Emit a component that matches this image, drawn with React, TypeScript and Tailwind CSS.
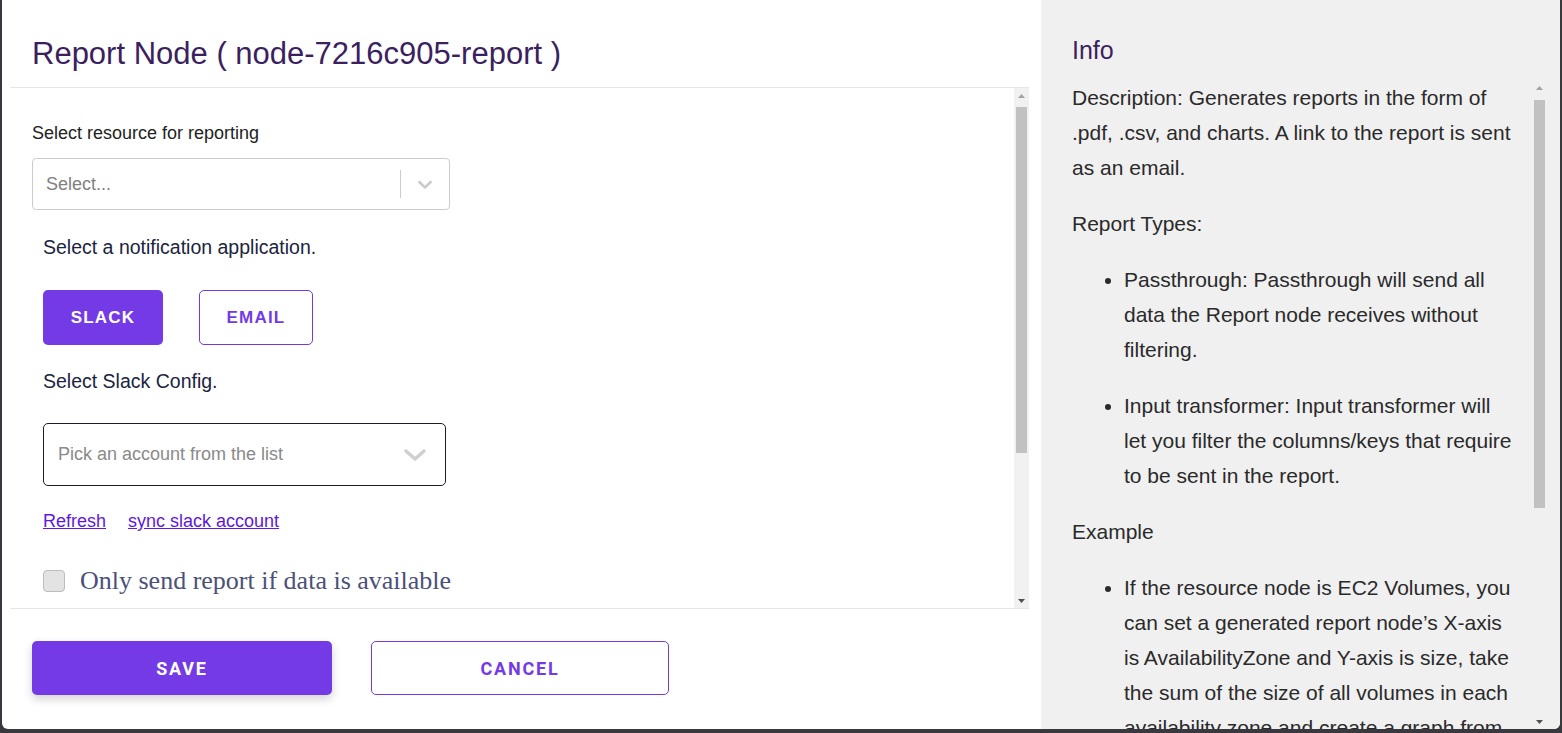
import React from 'react';

const sans = "font-['Liberation_Sans',Arial,sans-serif]";

function Chevron({ className }: { className?: string }) {
  return (
    <svg viewBox="0 0 20 20" className={className} fill="currentColor">
      <path d="M4.516 7.548c0.436-0.446 1.043-0.481 1.576 0l3.908 3.747 3.908-3.747c0.533-0.481 1.141-0.446 1.574 0 0.436 0.445 0.408 1.197 0 1.615-0.406 0.418-4.695 4.502-4.695 4.502-0.217 0.223-0.502 0.335-0.787 0.335s-0.57-0.112-0.789-0.335c0 0-4.287-4.084-4.695-4.502s-0.436-1.17 0-1.615z" />
    </svg>
  );
}

// classic scrollbar look, drawn since the headless browser hides native ones
function Scrollbar({ thumbTop, thumbHeight, track }: { thumbTop: number; thumbHeight: number; track: string }) {
  return (
    <div className={`w-[15px] h-full shrink-0 flex flex-col ${track}`}>
      <div className="h-[15px] flex items-center justify-center shrink-0">
        <svg width="7" height="4" viewBox="0 0 7 4"><polygon points="3.5,0 7,4 0,4" fill="#a3a3a3" /></svg>
      </div>
      <div className="flex-1 px-[2px]">
        <div className="bg-[#c1c1c1]" style={{ marginTop: thumbTop, height: thumbHeight }} />
      </div>
      <div className="h-[15px] flex items-center justify-center shrink-0">
        <svg width="7" height="4" viewBox="0 0 7 4"><polygon points="0,0 7,0 3.5,4" fill="#505050" /></svg>
      </div>
    </div>
  );
}

export default function App() {
  return (
    <div className={`w-full h-[733px] bg-[#38383e] overflow-hidden ${sans}`}>
      <div className="ml-[2px] w-[1558px] h-[729px] bg-white rounded-b-[6px] overflow-hidden flex">
        {/* Left: form */}
        <div className="w-[1039px] h-full flex flex-col pl-[8px] pr-[12px]">
          <div className="h-[87px] pl-[22px] pt-[35px] shrink-0">
            <h1 className="text-[31px] leading-[37px] text-[#3c1f5f]">Report Node ( node-7216c905-report )</h1>
          </div>

          <div className="h-[522px] border-y border-[#e6e6e6] flex shrink-0">
            <div className="flex-1 overflow-hidden pl-[22px] pt-[35px]">
              <div className="text-[18px] leading-[20px] text-[#222]">Select resource for reporting</div>
              <div className="mt-[15px] w-[418px] h-[52px] border border-[#cccccc] rounded-[4px] flex items-center">
                <span className="flex-1 pl-[13px] text-[18px] text-[#808080]">Select...</span>
                <span className="w-px h-[28px] bg-[#cccccc]" />
                <span className="px-[12px] text-[#cccccc]">
                  <Chevron className="w-[24px] h-[24px]" />
                </span>
              </div>

              <div className="pl-[11px]">
                <div className="mt-[27px] text-[19.5px] leading-[20px] text-[#1b2440]">Select a notification application.</div>
                <div className="mt-[33px] flex gap-[36px]">
                  <button className="w-[120px] h-[55px] rounded-[5px] bg-[#733ae6] text-white text-[17px] font-bold tracking-[1.2px]">
                    SLACK
                  </button>
                  <button className="w-[114px] h-[55px] rounded-[5px] border border-[#733ae6] bg-white text-[#733ae6] text-[17px] font-bold tracking-[1.2px]">
                    EMAIL
                  </button>
                </div>

                <div className="mt-[26px] text-[19.5px] leading-[20px] text-[#1b2440]">Select Slack Config.</div>
                <div className="mt-[32px] w-[403px] h-[63px] border border-[#1c1c30] rounded-[5px] flex items-center pl-[14px] pr-[18px]">
                  <span className="flex-1 text-[18px] text-[#8a8a8a]">Pick an account from the list</span>
                  <svg width="24" height="16" viewBox="0 0 24 16" fill="none" stroke="#cfcfcf" strokeWidth="3.5" strokeLinecap="round" strokeLinejoin="round">
                    <polyline points="3,4 12,12 21,4" />
                  </svg>
                </div>

                <div className="mt-[25px] flex gap-[22px] text-[18px] leading-[20px] text-[#6118dd]">
                  <a href="#" className="underline">Refresh</a>
                  <a href="#" className="underline">sync slack account</a>
                </div>

                <label className="mt-[36px] flex items-center gap-[15px]">
                  <span className="w-[22px] h-[22px] rounded-[4px] bg-[#e3e3e3] border border-[#bdbdbd] shrink-0" />
                  <span className="font-['Liberation_Serif',serif] text-[26px] leading-[28px] text-[#4b5079]">Only send report if data is available</span>
                </label>
              </div>
            </div>
            <Scrollbar thumbTop={4} thumbHeight={346} track="bg-[#f1f1f1]" />
          </div>

          <div className="pl-[22px] pt-[32px] flex gap-[39px]">
            <button className="w-[300px] h-[54px] rounded-[5px] bg-[#733ae6] text-white font-['Roboto',sans-serif] font-bold text-[18px] tracking-[1.8px] shadow-[0_4px_10px_rgba(0,0,0,0.18)]">
              SAVE
            </button>
            <button className="w-[298px] h-[54px] rounded-[5px] border border-[#733ae6] bg-white text-[#733ae6] font-['Roboto',sans-serif] font-bold text-[18px] tracking-[1.8px]">
              CANCEL
            </button>
          </div>
        </div>

        {/* Right: info */}
        <div className="w-[519px] h-full bg-[#f0f0f0] flex flex-col pl-[31px] pr-[13px] pt-[35px]">
          <h2 className="text-[25px] leading-[30px] text-[#3c1f5f] shrink-0">Info</h2>
          <div className="mt-[15px] flex-1 min-h-0 flex justify-between">
            <div className="w-[441px] overflow-hidden text-[21px] leading-[35px] text-[#2a2a2a]">
              <div className="flex flex-col gap-[21px]">
                <p>Description: Generates reports in the form of .pdf, .csv, and charts. A link to the report is sent as an email.</p>
                <p>Report Types:</p>
                <ul className="list-disc pl-[52px] flex flex-col gap-[21px]">
                  <li>Passthrough: Passthrough will send all data the Report node receives without filtering.</li>
                  <li>Input transformer: Input transformer will let you filter the columns/keys that require to be sent in the report.</li>
                </ul>
                <p>Example</p>
                <ul className="list-disc pl-[52px] flex flex-col gap-[21px]">
                  <li>If the resource node is EC2 Volumes, you can set a generated report node’s X-axis is AvailabilityZone and Y-axis is size, take the sum of the size of all volumes in each availability zone and create a graph from it.</li>
                </ul>
              </div>
            </div>
            <Scrollbar thumbTop={5} thumbHeight={408} track="bg-[#f0f0f0]" />
          </div>
        </div>
      </div>
    </div>
  );
}
